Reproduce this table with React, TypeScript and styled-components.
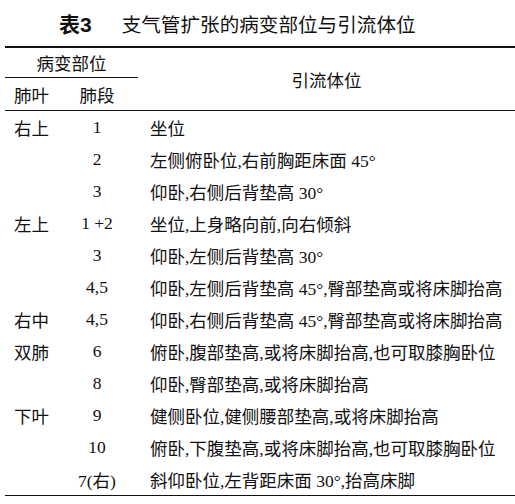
import React from 'react';
import styled, { createGlobalStyle } from 'styled-components';

const GlobalStyle = createGlobalStyle`
  html, body {
    margin: 0;
    padding: 0;
    background: #ffffff;
  }
  body {
    font-family: "Liberation Serif", "Noto Sans CJK SC", serif;
    color: #111111;
  }
`;

interface Row {
  lobe?: string;
  segment: string;
  position: string;
}

const rows: Row[] = [
  { lobe: '右上', segment: '1', position: '坐位' },
  { segment: '2', position: '左侧俯卧位,右前胸距床面 45°' },
  { segment: '3', position: '仰卧,右侧后背垫高 30°' },
  { lobe: '左上', segment: '1 +2', position: '坐位,上身略向前,向右倾斜' },
  { segment: '3', position: '仰卧,左侧后背垫高 30°' },
  { segment: '4,5', position: '仰卧,左侧后背垫高 45°,臀部垫高或将床脚抬高' },
  { lobe: '右中', segment: '4,5', position: '仰卧,右侧后背垫高 45°,臀部垫高或将床脚抬高' },
  { lobe: '双肺', segment: '6', position: '俯卧,腹部垫高,或将床脚抬高,也可取膝胸卧位' },
  { segment: '8', position: '仰卧,臀部垫高,或将床脚抬高' },
  { lobe: '下叶', segment: '9', position: '健侧卧位,健侧腰部垫高,或将床脚抬高' },
  { segment: '10', position: '俯卧,下腹垫高,或将床脚抬高,也可取膝胸卧位' },
  { segment: '7(右)', position: '斜仰卧位,左背距床面 30°,抬高床脚' },
];

const Page = styled.div`
  width: 515px;
  height: 504px;
  overflow: hidden;
`;

const Title = styled.div`
  height: 46px;
  display: flex;
  align-items: center;
  padding-left: 59px;
  gap: 30px;
  font-family: "Noto Sans CJK SC", sans-serif;
`;

const TitleNo = styled.span`
  font-size: 21px;
  font-weight: 700;
  font-family: "Liberation Sans", "Noto Sans CJK SC", sans-serif;
`;

const TitleText = styled.span`
  font-size: 19.6px;
  font-weight: 400;
`;

const Table = styled.div`
  margin-left: 5px;
  width: 510px;
  display: grid;
  grid-template-columns: 51px 82px 1fr;
  border-top: 2px solid #111;
  border-bottom: 1.5px solid #111;
  font-size: 17.5px;
`;

const HeadCell = styled.div<{ $area: string; $h: number; $left?: boolean }>`
  grid-area: ${(p) => p.$area};
  height: ${(p) => p.$h}px;
  display: flex;
  align-items: center;
  justify-content: ${(p) => (p.$left ? 'flex-start' : 'center')};
  padding-left: ${(p) => (p.$left ? '9px' : '0')};
  border-bottom: 1px solid #111;
  font-family: "Noto Sans CJK SC", sans-serif;
  white-space: nowrap;
`;

const Cell = styled.div<{ $align: 'left' | 'center' }>`
  height: 32px;
  display: flex;
  align-items: center;
  justify-content: ${(p) => (p.$align === 'center' ? 'center' : 'flex-start')};
  padding-left: ${(p) => (p.$align === 'left' ? '9px' : '0')};
  white-space: nowrap;
`;

const Position = styled(Cell)`
  padding-left: 12px;
`;

export default function App() {
  return (
    <Page>
      <GlobalStyle />
      <Title>
        <TitleNo>表3</TitleNo>
        <TitleText>支气管扩张的病变部位与引流体位</TitleText>
      </Title>
      <Table>
        <HeadCell $area="1 / 1 / 2 / 3" $h={29}>病变部位</HeadCell>
        <HeadCell $area="1 / 3 / 3 / 4" $h={62}>引流体位</HeadCell>
        <HeadCell $area="2 / 1 / 3 / 2" $h={31} $left>肺叶</HeadCell>
        <HeadCell $area="2 / 2 / 3 / 3" $h={31}>肺段</HeadCell>
        {rows.map((r, i) => (
          <React.Fragment key={i}>
            <Cell $align="left">{r.lobe ?? ''}</Cell>
            <Cell $align="center">{r.segment}</Cell>
            <Position $align="left">{r.position}</Position>
          </React.Fragment>
        ))}
      </Table>
    </Page>
  );
}
